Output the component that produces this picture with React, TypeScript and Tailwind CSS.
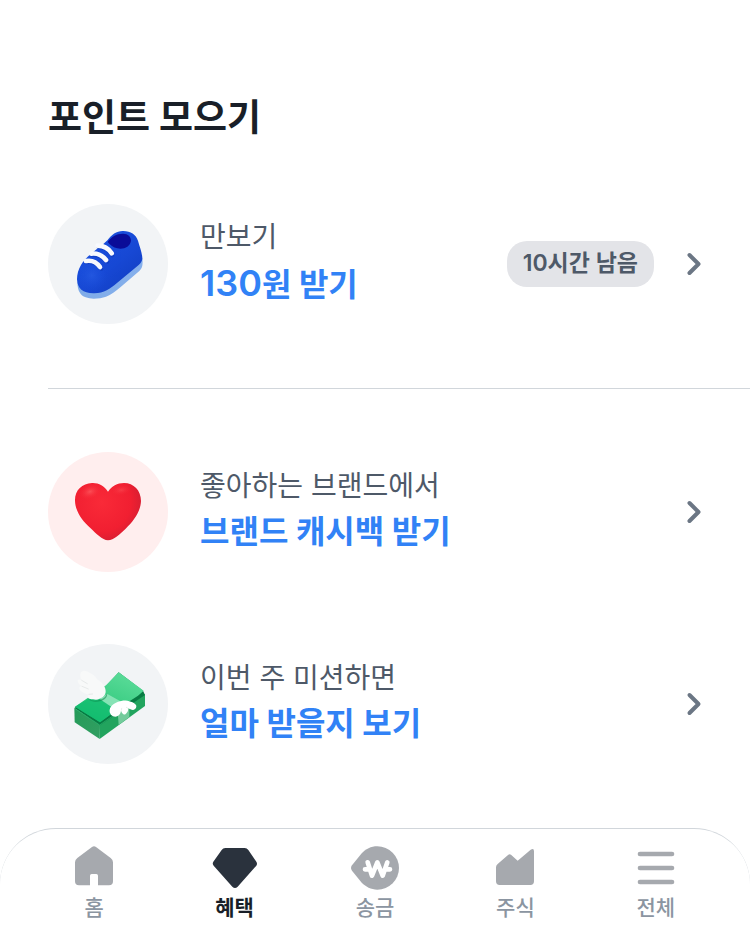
import type { ReactNode } from "react";
import clsx from "clsx";

const shoeBody =
  "M203 132C214 116 231 104 250 105C272 105 288 116 294 134C299 152 306 169 307 186C307 198 298 206 288 214L230 262C211 278 192 292 163 292C130 293 112 278 111 250C111 235 115 221 123 207C139 179 176 158 203 132Z";

const ShoeIcon = () => (
  <svg viewBox="24 24 360 360" className="size-full" aria-hidden="true">
    <defs>
      <linearGradient id="shoe-body" x1="0.2" y1="0.2" x2="0.8" y2="0.9">
        <stop offset="0" stopColor="#1a50de" />
        <stop offset="0.55" stopColor="#1748d4" />
        <stop offset="1" stopColor="#123fc4" />
      </linearGradient>
      <radialGradient id="shoe-toe" cx="156" cy="238" r="48" gradientUnits="userSpaceOnUse">
        <stop offset="0" stopColor="#2a60e6" stopOpacity="0.6" />
        <stop offset="1" stopColor="#1a50de" stopOpacity="0" />
      </radialGradient>
      <linearGradient id="shoe-sole" x1="0" y1="0" x2="1" y2="0">
        <stop offset="0" stopColor="#7fabe8" />
        <stop offset="1" stopColor="#86b0ec" />
      </linearGradient>
    </defs>
    <path
      d="M112 260C113 284 121 298 137 304C154 311 180 308 198 302C213 297 227 285 242 273L298 225C308 216 309 205 307 186L290 190L130 250Z"
      fill="url(#shoe-sole)"
    />
    <path d={shoeBody} fill="url(#shoe-body)" />
    <path d={shoeBody} fill="url(#shoe-toe)" />
    <path
      d="M203 138C213 122 232 112 250 113C264 113 273 122 273 134C270 152 252 161 232 157C220 154 211 148 203 138Z"
      fill="#0a0c98"
    />
    <g fill="none" stroke="#0d36b4" strokeWidth="12" strokeLinecap="round" opacity="0.5">
      <path d="M140 199C158 196 174 204 184 219" />
      <path d="M155 177C174 175 190 184 202 197" />
      <path d="M175 153C192 154 208 163 217 178" />
    </g>
    <g fill="none" stroke="#f8f9fd" strokeWidth="14" strokeLinecap="round">
      <path d="M138 195C154 192 170 199 180 213" />
      <path d="M154 173C171 171 187 178 198 192" />
      <path d="M173 149C190 149 206 158 215 172" />
    </g>
  </svg>
);

const HeartIcon = () => (
  <svg viewBox="24 24 360 360" className="size-full" aria-hidden="true">
    <defs>
      <radialGradient id="heart-body" cx="185" cy="175" r="125" gradientUnits="userSpaceOnUse">
        <stop offset="0" stopColor="#f92a38" />
        <stop offset="0.7" stopColor="#f11f31" />
        <stop offset="1" stopColor="#d51e32" />
      </radialGradient>
      <radialGradient id="heart-shine">
        <stop offset="0" stopColor="#ff6a6c" stopOpacity="0.6" />
        <stop offset="1" stopColor="#f92a38" stopOpacity="0" />
      </radialGradient>
    </defs>
    <path
      d="M204 143C193 125 175 116 156 117C126 118 104 139 105 170C106 202 126 230 151 252C168 268 187 288 204 289C221 288 240 270 257 254C282 230 302 202 303 171C303 139 281 117 252 117C232 117 215 126 204 143Z"
      fill="url(#heart-body)"
    />
    <ellipse cx="150" cy="143" rx="34" ry="22" fill="url(#heart-shine)" transform="rotate(-20 150 143)" />
    <ellipse cx="244" cy="138" rx="32" ry="16" fill="url(#heart-shine)" opacity="0.6" transform="rotate(-10 244 138)" />
  </svg>
);

const MoneyIcon = () => (
  <svg viewBox="24 24 360 360" className="size-full" aria-hidden="true">
    <defs>
      <linearGradient id="bill-top" x1="0.8" y1="0" x2="0.2" y2="1">
        <stop offset="0" stopColor="#5ddc9a" />
        <stop offset="0.5" stopColor="#3fcf86" />
        <stop offset="1" stopColor="#12b76a" />
      </linearGradient>
      <linearGradient id="bill-left" x1="0" y1="0" x2="1" y2="1">
        <stop offset="0" stopColor="#249a58" />
        <stop offset="1" stopColor="#329f62" />
      </linearGradient>
    </defs>
    <path d="M103 216L180 265L179 309L104 259Z" fill="url(#bill-left)" />
    <path d="M179 265L315 174L315 210L179 309Z" fill="#22a45e" />
    <path d="M103 216L196 152L236 109L309 164L315 177L180 268Z" fill="#087b43" />
    <path d="M105 212L198 148L236 109L311 164L294 179L251 207L180 259Z" fill="url(#bill-top)" />
    <path d="M105 212L171 174L232 220L180 259Z" fill="#12bd70" opacity="0.75" />
    <path d="M106 219L179 267L234 229" fill="none" stroke="#2fb872" strokeWidth="2" />
    <path d="M179 189L201 173L252 202L228 222Z" fill="#87e3b5" />
    <path d="M233 226L268 201L268 243L236 267Z" fill="#73cb9b" />
    <path
      d="M145 190C158 197 180 196 195 183L201 172C204 183 194 192 183 195C168 199 153 198 145 190Z"
      fill="#087b43"
      opacity="0.5"
    />
    <path
      d="M129 105C137 103 144 108 150 111C160 116 168 122 171 130C184 138 196 150 197 165C198 180 183 190 168 191C155 191 145 189 143 184C142 180 144 177 147 175C135 174 121 166 118 158C117 153 121 150 125 151C117 145 112 138 113 133C115 129 121 131 125 133C119 122 119 107 129 105Z"
      fill="#f8f9f9"
    />
    <path d="M125 133L142 143M126 151L145 159M147 175L158 174" fill="none" stroke="#e6e9e9" strokeWidth="3" strokeLinecap="round" />
    <path
      d="M209 221C211 207 230 196 247 194C263 193 281 198 288 207C291 213 287 221 279 222C274 222 269 219 264 217C266 224 262 230 257 234C251 239 245 231 243 224C242 233 236 241 226 242C216 242 207 232 209 221Z"
      fill="#ffffff"
    />
    <path d="M244 223L245 217M264 217L259 214" stroke="#dce5e1" strokeWidth="2" strokeLinecap="round" />
  </svg>
);

const HomeIcon = () => (
  <svg viewBox="210 69 144 144" className="size-12" fill="currentColor" aria-hidden="true">
    <path d="M276 81Q282 76 288 81L332 114Q339 119 339 127V184Q339 196 327 196H294V167Q294 162 289 162H275Q270 162 270 167V196H237Q225 196 225 184V127Q225 119 232 114Z" />
  </svg>
);

const BenefitIcon = () => (
  <svg viewBox="633 69 144 144" className="size-12" fill="currentColor" aria-hidden="true">
    <path d="M676 84H734Q741 84 745 90L769 125Q773 131 769 137L713 200Q705 208 697 200L641 137Q636 131 640 125L665 90Q669 84 676 84Z" />
  </svg>
);

const SendIcon = () => (
  <svg viewBox="63 69 144 144" className="size-12" aria-hidden="true">
    <path
      d="M142 79A65 65 0 0 1 142 209C123 209 107 201 94 187L66 152Q60 144 66 136L94 101C107 87 123 79 142 79Z"
      fill="currentColor"
    />
    <path
      d="M113 127L126 167L142 127L158 167L172 127M105 148H118M168 148H180"
      fill="none"
      stroke="#fff"
      strokeWidth="14"
      strokeLinecap="round"
      strokeLinejoin="round"
    />
  </svg>
);

const StockIcon = () => (
  <svg viewBox="483 69 144 144" className="size-12" fill="currentColor" aria-hidden="true">
    <path d="M503 132L535 104Q539 101 543 104L563 122L602 89Q612 83 612 94V184Q612 195 601 195H509Q498 195 498 184V142Q498 136 503 132Z" />
  </svg>
);

const MenuIcon = () => (
  <svg viewBox="907 69 144 144" className="size-12" aria-hidden="true">
    <path d="M931 102H1027M931 144H1027M931 186H1027" stroke="currentColor" strokeWidth="14" strokeLinecap="round" />
  </svg>
);

const ChevronIcon = () => (
  <svg viewBox="0 0 16 24" className="h-6 w-4 shrink-0" aria-hidden="true">
    <path
      d="M3.5 3L12.5 12L3.5 21"
      fill="none"
      stroke="#6b7684"
      strokeWidth="4"
      strokeLinecap="round"
      strokeLinejoin="round"
    />
  </svg>
);

type PointRowProps = {
  icon: ReactNode;
  iconClassName: string;
  label: string;
  title: ReactNode;
  badge?: string;
};

const PointRow = ({ icon, iconClassName, label, title, badge }: PointRowProps) => {
  return (
    <a href="#" className="flex items-center pr-12">
      <span className={clsx("size-[120px] shrink-0 overflow-hidden rounded-full", iconClassName)}>
        {icon}
      </span>
      <span className="ml-8 flex min-w-0 flex-1 flex-col pb-1">
        <span className="text-[28px] leading-[44px] text-[#4e5968]">{label}</span>
        <span className="text-[32px] leading-[48px] font-bold text-[#3182f6]">{title}</span>
      </span>
      {badge && (
        <span className="mr-8 rounded-[20px] bg-[#e3e4e8] px-4 pb-[2px] text-[23px] leading-[44px] font-semibold text-[#4e5968]">
          {badge}
        </span>
      )}
      <ChevronIcon />
    </a>
  );
};

const tabs = [
  { label: "홈", icon: <HomeIcon /> },
  { label: "혜택", icon: <BenefitIcon />, isCurrent: true },
  { label: "송금", icon: <SendIcon /> },
  { label: "주식", icon: <StockIcon /> },
  { label: "전체", icon: <MenuIcon /> },
];

const TabBar = () => {
  return (
    <nav className="grid min-h-28 grid-cols-5 rounded-t-[56px] border-t border-[#d1d6db] px-6 pt-[14px]">
      {tabs.map(({ label, icon, isCurrent }) => (
        <a
          key={label}
          href="#"
          aria-current={isCurrent ? "page" : undefined}
          className="flex flex-col items-center"
        >
          <span className={isCurrent ? "text-[#2a323d]" : "text-[#a6a9ae]"}>{icon}</span>
          <span
            className={clsx(
              "text-[21px] leading-[34px]",
              isCurrent ? "font-bold text-[#191f28]" : "font-medium text-[#8b95a1]",
            )}
          >
            {label}
          </span>
        </a>
      ))}
    </nav>
  );
};

export default function App() {
  return (
    <div className="flex min-h-screen flex-col bg-white font-['Inter','Noto_Sans_CJK_KR',sans-serif]">
      <main className="flex-1 pt-[88px] pb-16 pl-12">
        <h1 className="text-[37px] leading-[60px] font-bold text-[#191f28]">포인트 모으기</h1>
        <div className="mt-14">
          <PointRow
            icon={<ShoeIcon />}
            iconClassName="bg-[#f2f4f6]"
            label="만보기"
            title={
              <>
                <span className="text-[36px] font-semibold">130</span>원 받기
              </>
            }
            badge="10시간 남음"
          />
        </div>
        <hr className="mt-16 mb-[63px] border-[#d1d6db]" />
        <div className="flex flex-col gap-[72px]">
          <PointRow
            icon={<HeartIcon />}
            iconClassName="bg-[#ffeeee]"
            label="좋아하는 브랜드에서"
            title="브랜드 캐시백 받기"
          />
          <PointRow
            icon={<MoneyIcon />}
            iconClassName="bg-[#f2f4f6]"
            label="이번 주 미션하면"
            title="얼마 받을지 보기"
          />
        </div>
      </main>
      <TabBar />
    </div>
  );
}
